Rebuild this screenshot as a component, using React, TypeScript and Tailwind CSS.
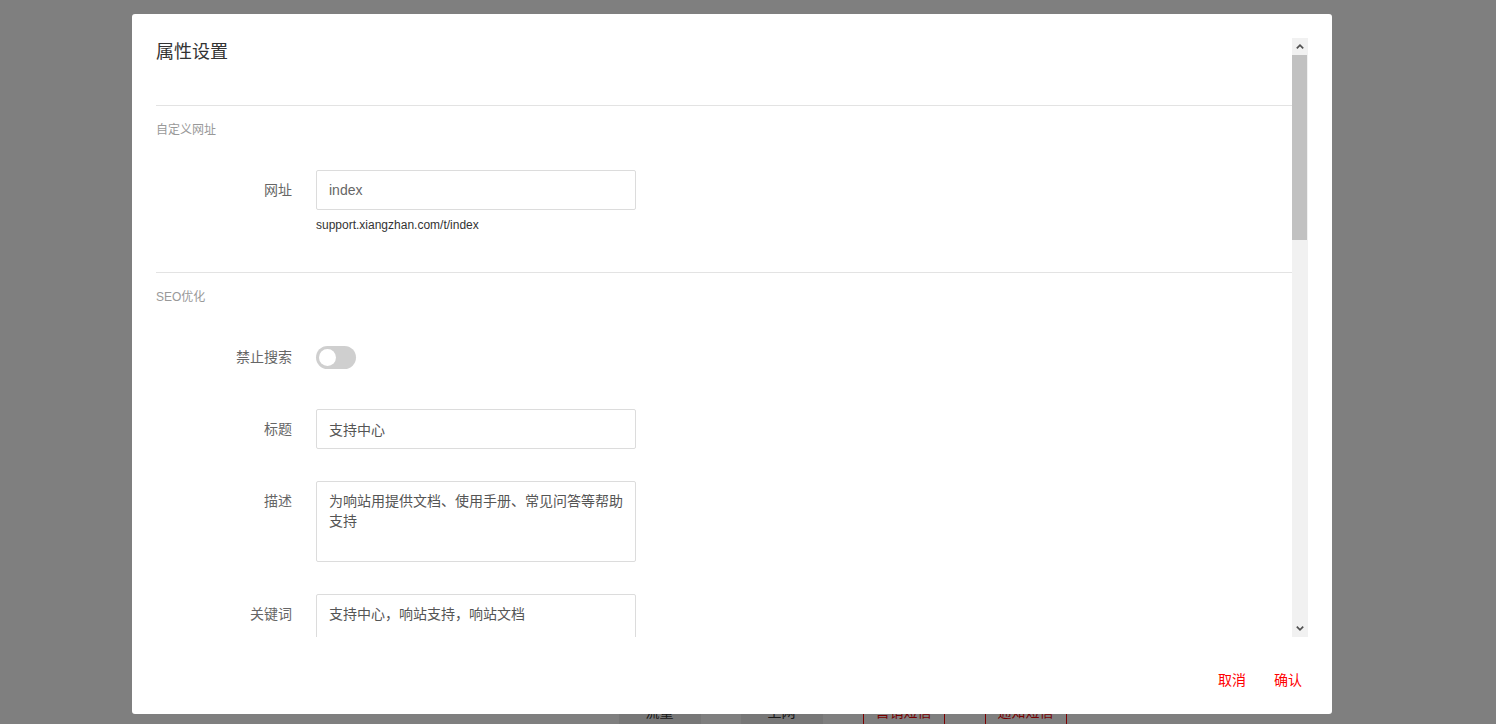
import React from "react";

const FieldRow = ({ label, children }: { label: string; children: React.ReactNode }) => (
  <div className="flex items-start">
    <div className="w-[136px] h-10 leading-10 text-right text-sm text-[#666]">{label}</div>
    <div className="ml-6">{children}</div>
  </div>
);

const inputCls =
  "block w-[320px] h-10 px-3 border border-[#dcdcdc] rounded-[2px] bg-white text-sm text-[#555] outline-none";
const areaCls =
  "block w-[320px] h-[81px] pl-3 pr-[11px] py-[9px] leading-5 border border-[#dcdcdc] rounded-[2px] bg-white text-sm text-[#555] outline-none resize-none overflow-hidden";

const Chevron = ({ up }: { up?: boolean }) => (
  <svg width="8" height="5" viewBox="0 0 8 5" className={up ? "" : "rotate-180"}>
    <path d="M0.8 4.4 L4 1.2 L7.2 4.4" fill="none" stroke="#505050" strokeWidth="1.7" />
  </svg>
);

export default function App() {
  return (
    <div className="relative h-[724px] w-full overflow-hidden bg-white font-['Liberation_Sans','Noto_Sans_CJK_SC',sans-serif]">
      {/* page behind the dialog */}
      <div className="flex flex-col items-center pl-[190px]">
        <div className="mt-[11px] h-8 text-[24px] leading-8 text-[#222]">响站支持中心</div>
        <div className="mt-[651px] flex gap-10 -ml-[1px]">
          <div className="w-[82px] h-9 flex items-center justify-center bg-[#eee] text-sm text-[#333]">流量</div>
          <div className="w-[82px] h-9 flex items-center justify-center bg-[#eee] text-sm text-[#333]">上网</div>
          <div className="w-[82px] h-9 flex items-center justify-center border border-[#f00] text-sm text-[#e00]">营销短信</div>
          <div className="w-[82px] h-9 flex items-center justify-center border border-[#f00] text-sm text-[#e00]">通知短信</div>
        </div>
      </div>

      <div className="absolute inset-0 bg-black/50" />

      {/* dialog */}
      <div className="absolute left-[132px] top-[14px] w-[1200px] h-[700px] bg-white rounded-[3px] flex flex-col px-6 pt-6">
        <div className="flex h-[599px]">
          <div className="w-[1136px] h-full overflow-hidden">
            <div className="h-[68px] border-b border-[#e3e3e3]">
              <h2 className="pt-[2px] text-[18px] leading-6 text-[#333]">属性设置</h2>
            </div>

            <section className="pt-4 pb-[39px] border-b border-[#e3e3e3]">
              <div className="text-xs leading-4 text-[#999]">自定义网址</div>
              <div className="mt-8">
                <FieldRow label="网址">
                  <input className={inputCls + " text-[#666]"} defaultValue="index" />
                  <div className="mt-[7px] text-xs leading-4 text-[#333]">support.xiangzhan.com/t/index</div>
                </FieldRow>
              </div>
            </section>

            <section className="pt-4">
              <div className="text-xs leading-4 text-[#999]">SEO优化</div>
              <div className="mt-8 flex flex-col gap-8">
                <FieldRow label="禁止搜索">
                  <div className="h-10 flex items-center">
                    <div className="w-10 h-[23px] rounded-full bg-[#cfcfcf] flex items-center">
                      <div className="ml-[3px] w-[17px] h-[17px] rounded-full bg-white" />
                    </div>
                  </div>
                </FieldRow>
                <FieldRow label="标题">
                  <input className={inputCls} defaultValue="支持中心" />
                </FieldRow>
                <FieldRow label="描述">
                  <textarea className={areaCls} readOnly value="为响站用提供文档、使用手册、常见问答等帮助支持" />
                </FieldRow>
                <FieldRow label="关键词">
                  <textarea className={areaCls} readOnly value="支持中心，响站支持，响站文档" />
                </FieldRow>
                <FieldRow label="统计代码">
                  <textarea className={areaCls} readOnly value="" />
                </FieldRow>
              </div>
            </section>
          </div>

          {/* scrollbar */}
          <div className="w-4 h-full bg-[#f1f1f1] flex flex-col">
            <div className="h-[17px] flex items-center justify-center">
              <Chevron up />
            </div>
            <div className="h-[185px] w-[15px] bg-[#c1c1c1]" />
            <div className="flex-1" />
            <div className="h-[17px] flex items-center justify-center">
              <Chevron />
            </div>
          </div>
        </div>

        <div className="flex justify-end gap-7 pt-[33px] pr-[6px] text-sm leading-5 text-[#f00]">
          <button className="cursor-pointer">取消</button>
          <button className="cursor-pointer">确认</button>
        </div>
      </div>
    </div>
  );
}
